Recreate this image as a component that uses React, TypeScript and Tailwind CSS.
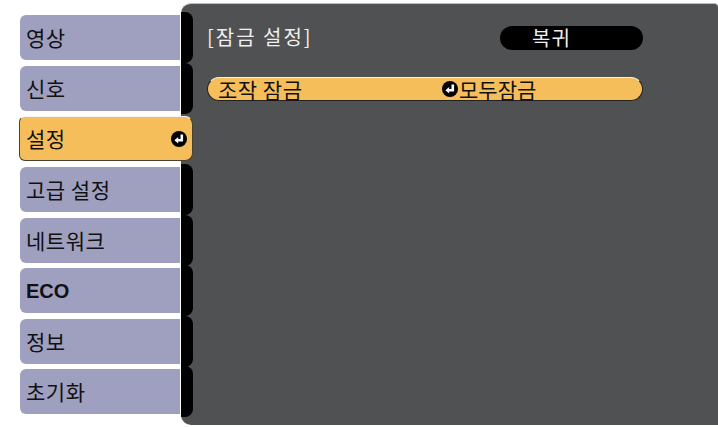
import React from "react";

const font = { fontFamily: '"Noto Sans CJK KR", "Noto Sans", sans-serif' };

function EnterIcon({ size = 15 }: { size?: number }) {
  return (
    <svg width={size} height={size} viewBox="0 0 16 16" className="shrink-0">
      <circle cx="8" cy="8" r="8" fill="#000" />
      <path d="M10.8 3.4 V9.2 H6.2" stroke="#fff" strokeWidth="2.6" fill="none" strokeLinejoin="miter" />
      <path d="M3.4 9.2 L7.2 6 L7.2 12.4 Z" fill="#fff" />
    </svg>
  );
}

const tabs = ["영상", "신호", "설정", "고급 설정", "네트워크", "ECO", "정보", "초기화"];
const selected = 2;

export default function App() {
  return (
    <div className="w-[718px] h-[427px] bg-white overflow-hidden flex" style={font}>
      {/* Tabs column */}
      <div className="w-[160px] ml-[20px] pt-[15px] flex flex-col gap-[5.65px] shrink-0">
        {tabs.map((t, i) =>
          i === selected ? (
            <div
              key={t}
              className="relative z-10 -ml-[1px] w-[174px] h-[45px] bg-[#f6be5b] rounded-l-[6px] rounded-r-[8px] border border-[#4a4030] border-t-[#f3f3f3] flex items-center pl-[6px] pr-[5px] justify-between"
            >
              <span className="text-[21px] leading-none text-[#111] tracking-[0.5px]">{t}</span>
              <EnterIcon size={16} />
            </div>
          ) : (
            <div
              key={t}
              className="h-[45px] bg-[#9f9fbf] rounded-l-[6px] flex items-center pl-[6px]"
            >
              <span
                className={
                  t === "ECO"
                    ? "text-[20px] leading-none text-[#111] font-bold"
                    : "text-[21px] leading-none text-[#111] tracking-[0.5px]"
                }
                style={t === "ECO" ? { fontFamily: '"Liberation Sans", sans-serif' } : undefined}
              >
                {t}
              </span>
            </div>
          )
        )}
      </div>

      {/* Main panel */}
      <div className="ml-[1px] mt-[3px] h-[422px] flex-1 bg-[#505153] rounded-l-[10px] rounded-tr-[4px] border-t border-[#bdbdbd] flex">
        {/* notch column */}
        <div className="w-[12px] pt-[8px] flex flex-col shrink-0">
          {tabs.map((t, i) => (
            <div key={t} className="h-[50.65px] shrink-0">
              {i !== selected && <div className="h-[51px] w-[12px] bg-black rounded-r-[8px]" />}
            </div>
          ))}
        </div>

        {/* content */}
        <div className="flex-1 pl-[14px] pr-[75px] pt-[22px] flex flex-col">
          <div className="flex items-center h-[24px]">
            <span className="flex-1 text-[20px] leading-none text-[#eeeeee] tracking-[2px] -mt-[3px]">[잠금 설정]</span>
            <div className="w-[143px] h-[24px] bg-black rounded-full flex items-center justify-center pr-[40px]">
              <span className="text-[20px] leading-none text-[#eeeeee] tracking-[1px]">복귀</span>
            </div>
          </div>

          <div className="mt-[27px] h-[24px] bg-[#f6be5b] rounded-full border border-[#222] border-t-[#f0f0f0] flex items-center pl-[10px]">
            <span className="w-[224px] text-[21px] leading-none text-[#111] tracking-[0.5px]">조작 잠금</span>
            <EnterIcon size={16} />
            <span className="ml-[1px] text-[21px] leading-none text-[#111]">모두잠금</span>
          </div>
        </div>
      </div>
    </div>
  );
}
